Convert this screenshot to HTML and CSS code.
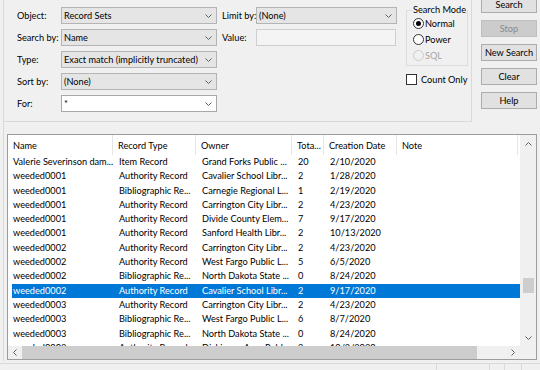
FILE: index.html
```html
<!DOCTYPE html>
<html lang="en">

<head>
  <meta charset="UTF-8">
  <title>Search</title>
  <link rel="stylesheet" href="styles.css">
</head>

<body>
  <div class="app">
    <div class="frame">
      <div class="top">
        <div class="criteria">
          <!-- search fields -->
          <div class="fields">
            <span class="label">Object:</span>
            <div class="combo">Record Sets<svg class="chev" width="7" height="4" viewBox="0 0 7 4"><polyline points="0.5,0.5 3.5,3.5 6.5,0.5" /></svg></div>
            <span class="label label-right">Limit by:</span>
            <div class="combo">(None)<svg class="chev" width="7" height="4" viewBox="0 0 7 4"><polyline points="0.5,0.5 3.5,3.5 6.5,0.5" /></svg></div>

            <span class="label">Search by:</span>
            <div class="combo">Name<svg class="chev" width="7" height="4" viewBox="0 0 7 4"><polyline points="0.5,0.5 3.5,3.5 6.5,0.5" /></svg></div>
            <span class="label label-right">Value:</span>
            <div class="textbox"></div>

            <span class="label">Type:</span>
            <div class="combo">Exact match (implicitly truncated)<svg class="chev" width="7" height="4" viewBox="0 0 7 4"><polyline points="0.5,0.5 3.5,3.5 6.5,0.5" /></svg></div>
            <span></span><span></span>

            <span class="label">Sort by:</span>
            <div class="combo">(None)<svg class="chev" width="7" height="4" viewBox="0 0 7 4"><polyline points="0.5,0.5 3.5,3.5 6.5,0.5" /></svg></div>
            <span></span><span></span>

            <span class="label">For:</span>
            <div class="combo combo-edit">*<svg class="chev" width="7" height="4" viewBox="0 0 7 4"><polyline points="0.5,0.5 3.5,3.5 6.5,0.5" /></svg></div>
          </div>

          <!-- search mode -->
          <div class="mode">
            <fieldset class="mode-group">
              <legend>Search Mode</legend>
              <div class="radio checked"><span class="dot"></span>Normal</div>
              <div class="radio"><span class="dot"></span>Power</div>
              <div class="radio disabled"><span class="dot"></span>SQL</div>
            </fieldset>
            <div class="check"><span class="box"></span>Count Only</div>
          </div>
        </div>

        <div class="actions">
          <button>Search</button>
          <button class="disabled">Stop</button>
          <button>New Search</button>
          <button>Clear</button>
          <button>Help</button>
        </div>
      </div>

      <!-- results -->
      <div class="listview">
        <div class="list-main">
          <div class="list-header">
            <div>Name</div>
            <div>Record Type</div>
            <div>Owner</div>
            <div>Tota...</div>
            <div>Creation Date</div>
            <div>Note</div>
          </div>
          <div class="list-rows">
            <div class="list-row"><div>Valerie Severinson dam...</div><div>Item Record</div><div>Grand Forks Public ...</div><div>20</div><div>2/10/2020</div><div></div></div>
            <div class="list-row"><div>weeded0001</div><div>Authority Record</div><div>Cavalier School Libr...</div><div>2</div><div>1/28/2020</div><div></div></div>
            <div class="list-row"><div>weeded0001</div><div>Bibliographic Re...</div><div>Carnegie Regional L...</div><div>1</div><div>2/19/2020</div><div></div></div>
            <div class="list-row"><div>weeded0001</div><div>Authority Record</div><div>Carrington City Libr...</div><div>2</div><div>4/23/2020</div><div></div></div>
            <div class="list-row"><div>weeded0001</div><div>Authority Record</div><div>Divide County Elem...</div><div>7</div><div>9/17/2020</div><div></div></div>
            <div class="list-row"><div>weeded0001</div><div>Authority Record</div><div>Sanford Health Libr...</div><div>2</div><div>10/13/2020</div><div></div></div>
            <div class="list-row"><div>weeded0002</div><div>Authority Record</div><div>Carrington City Libr...</div><div>2</div><div>4/23/2020</div><div></div></div>
            <div class="list-row"><div>weeded0002</div><div>Authority Record</div><div>West Fargo Public L...</div><div>5</div><div>6/5/2020</div><div></div></div>
            <div class="list-row"><div>weeded0002</div><div>Bibliographic Re...</div><div>North Dakota State ...</div><div>0</div><div>8/24/2020</div><div></div></div>
            <div class="list-row selected"><div>weeded0002</div><div>Authority Record</div><div>Cavalier School Libr...</div><div>2</div><div>9/17/2020</div><div></div></div>
            <div class="list-row"><div>weeded0003</div><div>Authority Record</div><div>Carrington City Libr...</div><div>2</div><div>4/23/2020</div><div></div></div>
            <div class="list-row"><div>weeded0003</div><div>Bibliographic Re...</div><div>West Fargo Public L...</div><div>6</div><div>8/7/2020</div><div></div></div>
            <div class="list-row"><div>weeded0003</div><div>Bibliographic Re...</div><div>North Dakota State ...</div><div>0</div><div>8/24/2020</div><div></div></div>
            <div class="list-row"><div>weeded0003</div><div>Authority Record</div><div>Dickinson Area Publ...</div><div>2</div><div>10/2/2020</div><div></div></div>
          </div>
        </div>

        <div class="vscroll">
          <div class="arrow"><svg width="7" height="4" viewBox="0 0 7 4"><polyline points="0.5,3.5 3.5,0.5 6.5,3.5" /></svg></div>
          <div class="vtrack"><div class="vthumb"></div></div>
          <div class="arrow"><svg width="7" height="4" viewBox="0 0 7 4"><polyline points="0.5,0.5 3.5,3.5 6.5,0.5" /></svg></div>
        </div>

        <div class="hscroll">
          <div class="arrow"><svg width="4" height="7" viewBox="0 0 4 7"><polyline points="3.5,0.5 0.5,3.5 3.5,6.5" /></svg></div>
          <div class="htrack"><div class="hthumb"></div></div>
          <div class="arrow"><svg width="4" height="7" viewBox="0 0 4 7"><polyline points="0.5,0.5 3.5,3.5 0.5,6.5" /></svg></div>
        </div>

        <div class="corner"></div>
      </div>
    </div>

    <div class="statusbar">
      <div class="pane pane-main"></div>
      <div class="pane" style="width: 53px"></div>
      <div class="pane" style="width: 15px"></div>
      <div class="pane" style="width: 17px"></div>
      <div class="pane pane-last"></div>
    </div>
  </div>
</body>

</html>
```

FILE: styles.css
```css
* {
  margin: 0;
  padding: 0;
  box-sizing: border-box;
}

body {
  width: 540px;
  height: 370px;
  overflow: hidden;
  background-color: #f0f0f0;
  font-family: Lato, "Liberation Sans", sans-serif;
  font-size: 9.2px;
  color: #000;
}

.app {
  display: flex;
  flex-direction: column;
  height: 370px;
}

.frame {
  flex: 1;
  margin-left: 3px;
  border-left: 1px solid #d9d9d9;
  display: flex;
  flex-direction: column;
}

/* top part: search criteria and buttons */
.top {
  display: flex;
  height: 122px;
}

.criteria {
  width: 468px;
  height: 122px;
  border-right: 1px solid #d9d9d9;
  border-bottom: 1px solid #d9d9d9;
  display: flex;
  padding-left: 13px;
}

.fields {
  margin-top: 7px;
  display: grid;
  grid-template-columns: 44px 156px 39px 141px;
  grid-template-rows: repeat(5, 17px);
  row-gap: 5px;
  align-self: flex-start;
}

.label {
  display: flex;
  align-items: center;
  white-space: nowrap;
}

.label-right {
  padding-left: 5px;
}

.combo {
  display: flex;
  align-items: center;
  justify-content: space-between;
  padding: 0 4px 0 2px;
  background-color: #e5e5e5;
  border: 1px solid #b4b4b4;
  white-space: nowrap;
}

.combo-edit {
  background-color: #fff;
  border-color: #a8a8a8;
}

.chev {
  flex-shrink: 0;
}

.chev polyline,
.arrow polyline {
  fill: none;
  stroke: #606060;
  stroke-width: 1;
}

.textbox {
  width: 140px;
  background-color: #f4f4f4;
  border: 1px solid #cfcfcf;
}

.mode {
  margin-left: 9px;
  margin-top: 4px;
  white-space: nowrap;
}

.mode-group {
  width: 57px;
  height: 62px;
  border: 1px solid #dcdcdc;
  padding: 0 0 0 5px;
}

.mode-group legend {
  padding: 0 1px;
  line-height: 12px;
}

.radio {
  display: flex;
  align-items: center;
  height: 16px;
  padding-left: 1px;
}

.radio:first-of-type {
  margin-top: -1px;
}

.radio .dot {
  width: 11px;
  height: 11px;
  border: 1px solid #333;
  border-radius: 50%;
  margin-right: 1px;
  background-color: #fff;
  display: flex;
  align-items: center;
  justify-content: center;
}

.radio.checked .dot::after {
  content: "";
  width: 5px;
  height: 5px;
  border-radius: 50%;
  background-color: #000;
}

.radio.disabled {
  color: #a6a6a6;
}

.radio.disabled .dot {
  border-color: #cccccc;
  background-color: #f0f0f0;
}

.check {
  display: flex;
  align-items: center;
  height: 13px;
  margin-top: 7px;
}

.check .box {
  width: 11px;
  height: 11px;
  border: 1px solid #333;
  background-color: #fff;
  margin-right: 4px;
}

.actions {
  margin-left: 9px;
  margin-top: -4px;
  display: flex;
  flex-direction: column;
  gap: 7px;
}

button {
  width: 56px;
  height: 17px;
  font-family: inherit;
  font-size: 9.2px;
  color: #000;
  background-color: #e1e1e1;
  border: 1px solid #adadad;
  white-space: nowrap;
}

button.disabled {
  background-color: #cccccc;
  border-color: #bfbfbf;
  color: #8a8a8a;
}

/* results list */
.listview {
  margin: 12px 3px 0 3px;
  height: 226px;
  border: 1px solid #9c9c9c;
  background-color: #fff;
  display: grid;
  grid-template-columns: 1fr 16px;
  grid-template-rows: 1fr 13px;
}

.list-main {
  overflow: hidden;
}

.list-header {
  display: grid;
  grid-template-columns: 105px 83px 96px 32px 73px 121px;
  height: 20px;
}

.list-header div {
  display: flex;
  align-items: center;
  padding-left: 5px;
  border-right: 1px solid #e5e5e5;
  white-space: nowrap;
}

.list-rows {
  height: 191px;
  overflow: hidden;
}

.list-row {
  display: grid;
  grid-template-columns: 101px 83px 96px 32px 73px 121px;
  margin-left: 4px;
  height: 14.3px;
  line-height: 14.3px;
}

.list-row div {
  padding-left: 6px;
  white-space: nowrap;
  overflow: hidden;
}

.list-row div:first-child {
  padding-left: 1px;
}

.list-row.selected {
  background-color: #0078d7;
  color: #fff;
}

.vscroll {
  background-color: #f0f0f0;
  display: flex;
  flex-direction: column;
}

.vscroll .arrow {
  height: 17px;
  display: flex;
  align-items: center;
  justify-content: center;
}

.vtrack {
  flex: 1;
}

.vthumb {
  margin: 126px 0 0 3px;
  width: 11px;
  height: 15px;
  background-color: #cdcdcd;
}

.hscroll {
  background-color: #f0f0f0;
  display: flex;
}

.hscroll .arrow {
  width: 14px;
  display: flex;
  align-items: center;
  justify-content: center;
}

.htrack {
  flex: 1;
}

.hthumb {
  width: 455px;
  height: 100%;
  background-color: #cdcdcd;
}

.corner {
  background-color: #f0f0f0;
}

/* status bar */
.statusbar {
  height: 7px;
  margin-top: 2px;
  border-top: 1px solid #d9d9d9;
  display: flex;
}

.pane {
  border-right: 1px solid #d9d9d9;
}

.pane-main {
  flex: 1;
}

.pane-last {
  width: 18px;
  border-right: none;
}
```
